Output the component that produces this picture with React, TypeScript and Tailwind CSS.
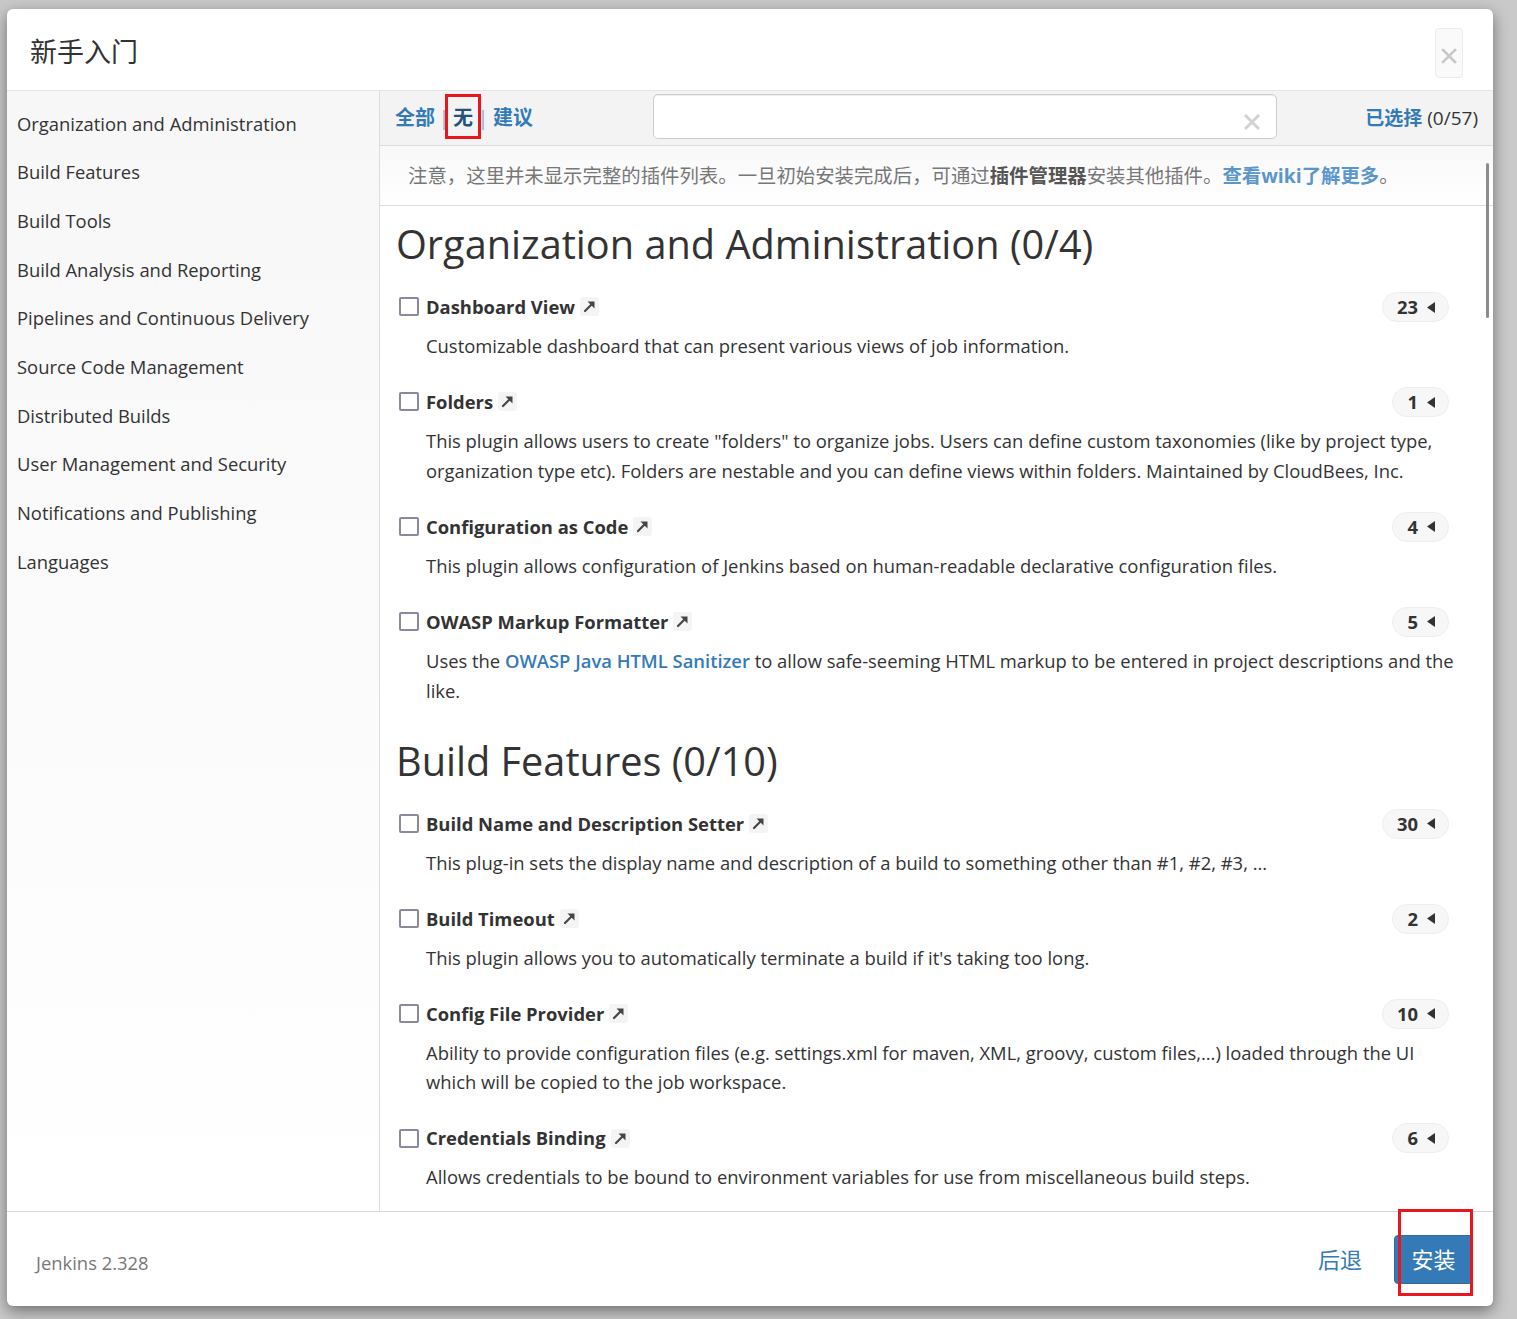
import React from "react";

type Plugin = {
  name: string;
  count: number;
  desc: React.ReactNode;
};

type Section = {
  title: string;
  selected: number;
  total: number;
  plugins: Plugin[];
};

const categories = [
  "Organization and Administration",
  "Build Features",
  "Build Tools",
  "Build Analysis and Reporting",
  "Pipelines and Continuous Delivery",
  "Source Code Management",
  "Distributed Builds",
  "User Management and Security",
  "Notifications and Publishing",
  "Languages",
];

const sections: Section[] = [
  {
    title: "Organization and Administration",
    selected: 0,
    total: 4,
    plugins: [
      {
        name: "Dashboard View",
        count: 23,
        desc: "Customizable dashboard that can present various views of job information.",
      },
      {
        name: "Folders",
        count: 1,
        desc: 'This plugin allows users to create "folders" to organize jobs. Users can define custom taxonomies (like by project type, organization type etc). Folders are nestable and you can define views within folders. Maintained by CloudBees, Inc.',
      },
      {
        name: "Configuration as Code",
        count: 4,
        desc: "This plugin allows configuration of Jenkins based on human-readable declarative configuration files.",
      },
      {
        name: "OWASP Markup Formatter",
        count: 5,
        desc: (
          <>
            Uses the{" "}
            <a href="#" className="font-semibold text-[#337ab7]">
              OWASP Java HTML Sanitizer
            </a>{" "}
            to allow safe-seeming HTML markup to be entered in project descriptions and the like.
          </>
        ),
      },
    ],
  },
  {
    title: "Build Features",
    selected: 0,
    total: 10,
    plugins: [
      {
        name: "Build Name and Description Setter",
        count: 30,
        desc: "This plug-in sets the display name and description of a build to something other than #1, #2, #3, ...",
      },
      {
        name: "Build Timeout",
        count: 2,
        desc: "This plugin allows you to automatically terminate a build if it's taking too long.",
      },
      {
        name: "Config File Provider",
        count: 10,
        desc: "Ability to provide configuration files (e.g. settings.xml for maven, XML, groovy, custom files,...) loaded through the UI which will be copied to the job workspace.",
      },
      {
        name: "Credentials Binding",
        count: 6,
        desc: "Allows credentials to be bound to environment variables for use from miscellaneous build steps.",
      },
    ],
  },
];

function XMark({ size, color, stroke }: { size: number; color: string; stroke: number }) {
  return (
    <svg width={size} height={size} viewBox="0 0 16 16">
      <path d="M2 2L14 14M14 2L2 14" stroke={color} strokeWidth={stroke} strokeLinecap="square" />
    </svg>
  );
}

function ExternalIcon() {
  return (
    <span className="ml-[5px] inline-flex h-[19px] w-[19px] items-center justify-center rounded-[3px] bg-[#f4f4f4]">
      <svg width="13" height="13" viewBox="0 0 13 13">
        <path d="M2 11L8 5" stroke="#444" strokeWidth="2.2" strokeLinecap="round" />
        <path d="M4.5 1.5H11.5V8.5Z" fill="#444" />
      </svg>
    </span>
  );
}

function Badge({ count }: { count: number }) {
  return (
    <span className="mr-[20px] inline-flex h-[30px] items-center rounded-full border border-[#eeeeee] bg-[#f7f7f7] pl-[14px] pr-[13px] text-[18.4px] font-bold text-[#333]">
      {count}
      <svg className="ml-[9px]" width="8" height="11" viewBox="0 0 8 11">
        <path d="M8 0V11L0 5.5Z" fill="#333" />
      </svg>
    </span>
  );
}

function PluginRow({ plugin }: { plugin: Plugin }) {
  return (
    <div className="pb-[27.25px]">
      <div className="flex h-[28px] items-center justify-between">
        <label className="ml-[3px] flex items-center">
          <span className="mr-[7px] h-[19px] w-[20px] rounded-[2px] border-2 border-[#8b8a9c] bg-white" />
          <span className="text-[18.4px] font-bold text-[#333]">{plugin.name}</span>
          <ExternalIcon />
        </label>
        <Badge count={plugin.count} />
      </div>
      <p className="ml-[30px] mt-[10px] text-[18.4px] leading-[29.75px] text-[#333]">{plugin.desc}</p>
    </div>
  );
}

export default function App() {
  return (
    <div
      className="h-[1319px] w-full overflow-hidden bg-[#c9c9c9] pl-[7px] pt-[9px]"
      style={{ fontFamily: "'Open Sans', 'Noto Sans CJK SC', sans-serif" }}
    >
      <div className="relative flex h-[1297px] w-[1486px] flex-col overflow-hidden rounded-[6px] bg-white shadow-[0_5px_15px_rgba(0,0,0,0.45)]">
        {/* header */}
        <div className="flex h-[82px] shrink-0 items-center justify-between border-b border-[#e5e5e5] pl-[23px] pr-[30px] pt-[6px]">
          <h1 className="text-[27px] font-normal text-[#333]">新手入门</h1>
          <button
            type="button"
            className="flex h-[50px] w-[28px] items-center justify-center rounded-[4px] border border-[#ebebeb] bg-[#fafafa] pt-[6px]"
          >
            <XMark size={16} color="#c8c8c8" stroke={2.6} />
          </button>
        </div>

        {/* body */}
        <div className="flex h-[1120px] shrink-0">
          <nav className="w-[373px] shrink-0 border-r border-[#dcdcdc] bg-linear-to-b from-[#f7f7f7] to-white pt-[8px]">
            {categories.map((c) => (
              <a
                key={c}
                href="#"
                className="flex h-[48.7px] items-center pl-[10px] text-[18.4px] text-[#333]"
              >
                {c}
              </a>
            ))}
          </nav>

          <div className="relative flex min-w-0 flex-1 flex-col">
            <div className="relative flex h-[55px] shrink-0 items-center border-b border-[#dcdcdc] bg-[#f3f3f3] pl-[15px] pr-[15px]">
              <div className="flex w-[258px] items-center text-[20px] font-bold">
                <a href="#" className="text-[#337ab7]">全部</a>
                <span className="inline-block w-[18px] text-center font-normal text-[#8fb0d2]">|</span>
                <a href="#" className="text-[#23527c]">无</a>
                <span className="inline-block w-[20px] text-center font-normal text-[#8fb0d2]">|</span>
                <a href="#" className="text-[#337ab7]">建议</a>
              </div>
              <div className="relative mb-[4px] h-[45px] w-[624px] rounded-[5px] border border-[#cccccc] bg-white shadow-[inset_0_1px_1px_rgba(0,0,0,0.075)]">
                <span className="absolute right-[16px] top-[19px] flex">
                  <XMark size={16} color="#d2d2d2" stroke={3} />
                </span>
              </div>
              <div className="flex-1 text-right text-[19px] text-[#333]">
                <span className="font-bold text-[#337ab7]">已选择</span> (0/57)
              </div>
              <span className="pointer-events-none absolute left-[65px] top-[3px] h-[45px] w-[36px] border-[3px] border-[#e8161d]" />
            </div>

            <div className="flex h-[60px] shrink-0 items-center border-b border-[#dcdcdc] bg-linear-to-b from-[#f8f8f8] to-white px-[28px] text-[19.4px] text-[#777]">
              <p>
                注意，这里并未显示完整的插件列表。一旦初始安装完成后，可通过
                <strong className="text-[#555]">插件管理器</strong>
                安装其他插件。
                <a href="#" className="font-bold text-[#5a95cc]">查看wiki了解更多</a>。
              </p>
            </div>

            <div className="min-h-0 flex-1 overflow-hidden pl-[16px] pr-[24px] pt-[16px]">
              {sections.map((s, i) => (
                <section key={s.title} className={i > 0 ? "mt-[6px]" : ""}>
                  <h2 className="mb-[27px] text-[39.7px] font-normal leading-[44px] text-[#333]">
                    {s.title} ({s.selected}/{s.total})
                  </h2>
                  {s.plugins.map((p) => (
                    <PluginRow key={p.name} plugin={p} />
                  ))}
                </section>
              ))}
            </div>

            <span className="absolute right-[4px] top-[72px] h-[155px] w-[3px] rounded-full bg-[#8c8c8c]" />
          </div>
        </div>

        {/* footer */}
        <div className="flex h-[95px] shrink-0 items-center border-t border-[#d8d8d8] pl-[29px]">
          <span className="mt-[7px] text-[18.4px] text-[#777]">Jenkins 2.328</span>
          <div className="ml-auto flex items-center">
            <a href="#" className="mr-[32px] text-[22px] text-[#337ab7]">后退</a>
            <button
              type="button"
              className="mr-[20px] h-[49px] w-[79px] rounded-[4px] border border-[#2e6da4] bg-[#337ab7] text-[22px] text-white"
            >
              安装
            </button>
          </div>
        </div>

        <span className="pointer-events-none absolute left-[1391px] top-[1200px] h-[87px] w-[75px] border-[3px] border-[#e8161d]" />
      </div>
    </div>
  );
}
